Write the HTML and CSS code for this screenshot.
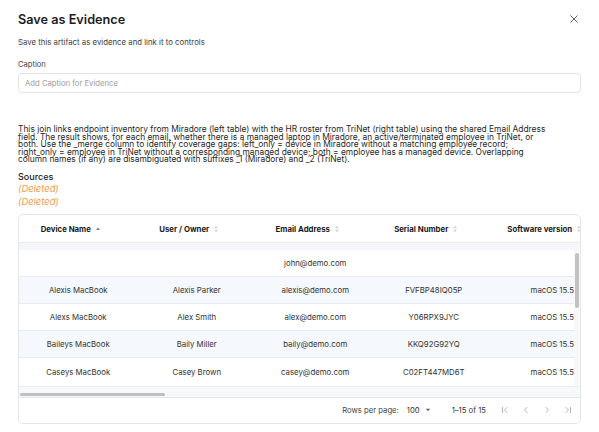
FILE: index.html
```html
<!DOCTYPE html>
<html lang="en">
<head>
    <meta charset="UTF-8">
    <meta name="viewport" content="width=device-width, initial-scale=1.0">
    <title>Save as Evidence</title>
    <link rel="stylesheet" href="styles.css">
</head>
<body>

    <div class="dialog">

        <!-- Title -->
        <div class="dialog-head">
            <h1>Save as Evidence</h1>
            <button class="close" aria-label="Close">
                <svg width="10" height="10" viewBox="0 0 10 10"><path d="M1.5 1.5 L8.5 8.5 M8.5 1.5 L1.5 8.5" stroke="#5f6368" stroke-width="1" fill="none"/></svg>
            </button>
        </div>
        <p class="subtitle">Save this artifact as evidence and link it to controls</p>

        <!-- Caption -->
        <label class="field-label" for="caption">Caption</label>
        <input class="caption-input" id="caption" type="text" placeholder="Add Caption for Evidence">

        <!-- Description -->
        <p class="description">This join links endpoint inventory from Miradore (left table) with the HR roster from TriNet (right table) using the shared Email Address<br>
            field. The result shows, for each email, whether there is a managed laptop in Miradore, an active/terminated employee in TriNet, or<br>
            both. Use the _merge column to identify coverage gaps: left_only = device in Miradore without a matching employee record;<br>
            right_only = employee in TriNet without a corresponding managed device; both = employee has a managed device. Overlapping<br>
            column names (if any) are disambiguated with suffixes _1 (Miradore) and _2 (TriNet).</p>

        <!-- Sources -->
        <div class="sources-title">Sources</div>
        <div class="deleted">(Deleted)</div>
        <div class="deleted">(Deleted)</div>

        <!-- Data grid -->
        <div class="grid">
            <div class="grid-head">
                <div class="head-cell"><span>Device Name</span>
                    <svg class="sort" width="6" height="8" viewBox="0 0 6 8"><path d="M3 2.6 L5 5 L1 5 Z" fill="#7a7a7a"/></svg>
                </div>
                <div class="head-cell"><span>User / Owner</span>
                    <svg class="sort" width="6" height="8" viewBox="0 0 6 8"><path d="M3 0.8 L5 3.2 L1 3.2 Z M3 7.2 L5 4.8 L1 4.8 Z" fill="#d0d3d7"/></svg>
                </div>
                <div class="head-cell"><span>Email Address</span>
                    <svg class="sort" width="6" height="8" viewBox="0 0 6 8"><path d="M3 0.8 L5 3.2 L1 3.2 Z M3 7.2 L5 4.8 L1 4.8 Z" fill="#d0d3d7"/></svg>
                </div>
                <div class="head-cell"><span>Serial Number</span>
                    <svg class="sort" width="6" height="8" viewBox="0 0 6 8"><path d="M3 0.8 L5 3.2 L1 3.2 Z M3 7.2 L5 4.8 L1 4.8 Z" fill="#d0d3d7"/></svg>
                </div>
                <div class="head-cell"><span>Software version</span>
                    <svg class="sort" width="6" height="8" viewBox="0 0 6 8"><path d="M3 0.8 L5 3.2 L1 3.2 Z M3 7.2 L5 4.8 L1 4.8 Z" fill="#d0d3d7"/></svg>
                </div>
            </div>
            <div class="grid-band"></div>

            <div class="grid-body">
                <div class="rows">
                    <div class="row">
                        <div class="cell"></div>
                        <div class="cell"></div>
                        <div class="cell">john@demo.com</div>
                        <div class="cell"></div>
                        <div class="cell"></div>
                    </div>
                    <div class="row alt">
                        <div class="cell">Alexis MacBook</div>
                        <div class="cell">Alexis Parker</div>
                        <div class="cell">alexis@demo.com</div>
                        <div class="cell">FVFBP48IQ05P</div>
                        <div class="cell">macOS 15.5</div>
                    </div>
                    <div class="row">
                        <div class="cell">Alexs MacBook</div>
                        <div class="cell">Alex Smith</div>
                        <div class="cell">alex@demo.com</div>
                        <div class="cell">Y06RPX9JYC</div>
                        <div class="cell">macOS 15.5</div>
                    </div>
                    <div class="row alt">
                        <div class="cell">Baileys MacBook</div>
                        <div class="cell">Baily Miller</div>
                        <div class="cell">baily@demo.com</div>
                        <div class="cell">KKQ92G92YQ</div>
                        <div class="cell">macOS 15.5</div>
                    </div>
                    <div class="row">
                        <div class="cell">Caseys MacBook</div>
                        <div class="cell">Casey Brown</div>
                        <div class="cell">casey@demo.com</div>
                        <div class="cell">C02FT447MD6T</div>
                        <div class="cell">macOS 15.5</div>
                    </div>
                </div>
                <div class="vscroll"><div class="vthumb"></div></div>
            </div>

            <div class="hscroll"><div class="hthumb"></div></div>

            <!-- Pagination -->
            <div class="grid-footer">
                <span class="rows-label">Rows per page:</span>
                <span class="rows-select">100
                    <svg width="6" height="4" viewBox="0 0 6 4"><path d="M0.8 0.8 L5.2 0.8 L3 3.2 Z" fill="#666"/></svg>
                </span>
                <span class="range">1–15 of 15</span>
                <div class="pager">
                    <svg width="8" height="8" viewBox="0 0 8 8"><path d="M1.5 1 V7 M6.3 1.2 L3.5 4 L6.3 6.8" stroke="#a7abb0" stroke-width="0.9" fill="none"/></svg>
                    <svg width="8" height="8" viewBox="0 0 8 8"><path d="M5.3 1.2 L2.5 4 L5.3 6.8" stroke="#a7abb0" stroke-width="0.9" fill="none"/></svg>
                    <svg width="8" height="8" viewBox="0 0 8 8"><path d="M2.7 1.2 L5.5 4 L2.7 6.8" stroke="#a7abb0" stroke-width="0.9" fill="none"/></svg>
                    <svg width="8" height="8" viewBox="0 0 8 8"><path d="M1.7 1.2 L4.5 4 L1.7 6.8 M6.5 1 V7" stroke="#a7abb0" stroke-width="0.9" fill="none"/></svg>
                </div>
            </div>
        </div>

    </div>

</body>
</html>
```

FILE: styles.css
```css
body {
    margin: 0;
    font-family: Inter, "Noto Sans", sans-serif;
    background-color: #fff;
    color: #222;
}
.dialog {
    padding: 10px 18px 0 18px;
}
.dialog-head {
    display: flex;
    justify-content: space-between;
    height: 20px;
}
.dialog-head h1 {
    margin: 0;
    font-size: 12.7px;
    font-weight: 600;
    line-height: 20px;
    color: #1d1d1f;
}
.close {
    border: 0;
    background: none;
    padding: 0;
    width: 10px;
    height: 10px;
    margin: 4px 2px 0 0;
    display: flex;
}
.subtitle {
    margin: 6px 0 0 0;
    font-size: 7.8px;
    line-height: 12px;
    color: #3d3d3d;
}
.field-label {
    display: block;
    margin-top: 11px;
    font-size: 7.6px;
    line-height: 12px;
    color: #444;
}
.caption-input {
    display: block;
    box-sizing: border-box;
    width: 100%;
    height: 20px;
    margin: 2px 0 0 0;
    padding: 0 6px;
    border: 1px solid #dfe2e6;
    border-radius: 4px;
    font-family: Inter, "Noto Sans", sans-serif;
    font-size: 7.7px;
    color: #222;
}
.caption-input::placeholder {
    color: #9a9a9a;
}
.description {
    margin: 33px 0 0 0;
    font-size: 8.4px;
    line-height: 7.5px;
    color: #1f1f1f;
    white-space: nowrap;
}
.sources-title {
    margin-top: 8px;
    font-size: 9px;
    font-weight: 500;
    line-height: 10px;
    color: #222;
}
.deleted {
    font-size: 9.4px;
    font-style: italic;
    line-height: 13.3px;
    color: #f29b4b;
}

/* grid */
.grid {
    margin-top: 6px;
    border: 1px solid #e3e6ea;
    border-radius: 5px;
    overflow: hidden;
}
.grid-head {
    display: flex;
    height: 28px;
    box-sizing: border-box;
    border-bottom: 1px solid #e9ecef;
    overflow: hidden;
}
.head-cell {
    flex: 0 0 118.5px;
    box-sizing: border-box;
    padding-right: 15px;
    display: flex;
    align-items: center;
    justify-content: center;
    gap: 4px;
    font-size: 7.8px;
    font-weight: 700;
    color: #1a1a1a;
    white-space: nowrap;
}
.grid-band {
    height: 6.5px;
    background-color: #f4f6f9;
}
.grid-body {
    display: flex;
}
.rows {
    flex: 1;
    overflow: hidden;
}
.row {
    display: flex;
    height: 27.2px;
    box-sizing: border-box;
    border-bottom: 1px solid #e8ebef;
}
.row:last-child {
    border-bottom: 0;
}
.row.alt {
    background-color: #f5f8fc;
}
.cell {
    flex: 0 0 118.5px;
    display: flex;
    align-items: center;
    justify-content: center;
    font-size: 7.8px;
    color: #333;
    white-space: nowrap;
}
.vscroll {
    flex: 0 0 6px;
    background-color: #f8f8f8;
}
.vthumb {
    width: 3.5px;
    height: 55px;
    margin: 3px 0 0 1px;
    border-radius: 2px;
    background-color: #c2c2c2;
}
.hscroll {
    height: 11px;
    box-sizing: border-box;
    padding: 6px 0 0 1px;
    background-color: #f7f8fa;
    border-top: 1px solid #eceef1;
}
.hthumb {
    width: 145px;
    height: 3.3px;
    border-radius: 2px;
    background-color: #bfbfbf;
}
.grid-footer {
    display: flex;
    align-items: center;
    justify-content: flex-end;
    height: 26px;
    box-sizing: border-box;
    border-top: 1px solid #e3e6ea;
    padding-right: 8px;
    font-size: 7.7px;
    color: #444;
}
.rows-select {
    display: flex;
    align-items: center;
    gap: 5px;
    margin-left: 8px;
    color: #333;
}
.range {
    margin-left: 21px;
    color: #333;
}
.pager {
    display: flex;
    gap: 13px;
    margin-left: 15px;
}
```
